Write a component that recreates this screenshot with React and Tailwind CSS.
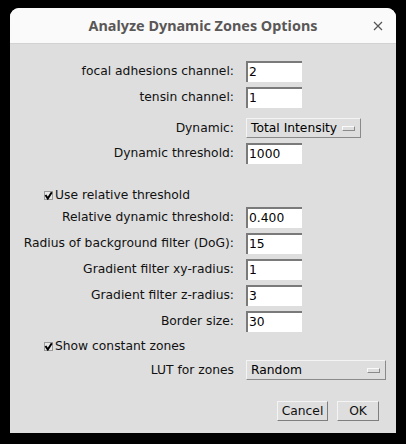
import React from 'react';

const font = { fontFamily: '"DejaVu Sans", sans-serif' };

function Field({ value }) {
  return (
    <div className="h-[21px] w-[56px] bg-white border-t-2 border-l-2 border-t-[#7a7a7a] border-l-[#7a7a7a] flex items-center pl-[1px] text-[12.3px] text-black leading-none">
      {value}
    </div>
  );
}

function Choice({ value, width }) {
  return (
    <div className={`h-[20px] ${width} bg-[#dedede] border border-t-[#f4f4f4] border-l-[#f4f4f4] border-r-[#8a8a8a] border-b-[#8a8a8a] flex items-center justify-between pl-[4px] pr-[5px] text-[12.3px] text-black leading-none`}>
      <span>{value}</span>
      <span className="w-[13px] h-[5px] border border-t-[#fafafa] border-l-[#fafafa] border-r-[#8a8a8a] border-b-[#8a8a8a] bg-[#dedede]" />
    </div>
  );
}

function Row({ label, children, className = '' }) {
  return (
    <div className={`grid grid-cols-[224px_auto] gap-x-[12px] items-center ${className}`}>
      <div className="text-right text-[12.3px] text-[#111] leading-none whitespace-nowrap">{label}</div>
      <div>{children}</div>
    </div>
  );
}

function Check({ label, className = '' }) {
  return (
    <div className={`flex items-center pl-[34px] h-[16px] text-[12.3px] text-[#111] leading-none ${className}`}>
      <svg width="9" height="9" viewBox="0 0 9 9" className="mr-[2px]">
        <rect x="0.5" y="0.5" width="8" height="8" fill="#e8e8e8" stroke="#9a9a9a" />
        <path d="M1.5 4 L3.8 7.5 L7.8 1.2" fill="none" stroke="#000" strokeWidth="2" />
      </svg>
      <span>{label}</span>
    </div>
  );
}

function Button({ label, width }) {
  return (
    <div className={`h-[20px] ${width} border border-t-[#f4f4f4] border-l-[#f4f4f4] border-r-[#7e7e7e] border-b-[#7e7e7e] flex items-center justify-center text-[12.3px] text-[#111] leading-none`}>
      {label}
    </div>
  );
}

export default function App() {
  return (
    <div className="w-[406px] h-[444px] bg-black pt-[8px] pl-[10px]" style={font}>
      <div className="w-[386px] h-[425px] rounded-t-[9px] overflow-hidden bg-[#dedede] flex flex-col">
        <div className="h-[36px] bg-[#fafafa] border-b border-[#d2d2d2] relative flex items-center justify-center">
          <span className="text-[14.4px] font-bold text-[#5a5757]" style={{ fontFamily: '"Noto Sans", sans-serif' }}>
            Analyze Dynamic Zones Options
          </span>
          <svg className="absolute right-[13px] top-[13px]" width="10" height="10" viewBox="0 0 10 10">
            <path d="M1 1 L9 9 M9 1 L1 9" stroke="#555" strokeWidth="1.2" />
          </svg>
        </div>

        <div className="flex flex-col">
          <Row label="focal adhesions channel:" className="mt-[17px]"><Field value="2" /></Row>
          <Row label="tensin channel:" className="mt-[5px]"><Field value="1" /></Row>
          <Row label="Dynamic:" className="mt-[10px]"><Choice value="Total Intensity" width="w-[115px]" /></Row>
          <Row label="Dynamic threshold:" className="mt-[5px]"><Field value="1000" /></Row>
          <Check label="Use relative threshold" className="mt-[23px]" />
          <Row label="Relative dynamic threshold:" className="mt-[4px]"><Field value="0.400" /></Row>
          <Row label="Radius of background filter (DoG):" className="mt-[5px]"><Field value="15" /></Row>
          <Row label="Gradient filter xy-radius:" className="mt-[5px]"><Field value="1" /></Row>
          <Row label="Gradient filter z-radius:" className="mt-[5px]"><Field value="3" /></Row>
          <Row label="Border size:" className="mt-[5px]"><Field value="30" /></Row>
          <Check label="Show constant zones" className="mt-[6px]" />
          <Row label="LUT for zones" className="mt-[6px]"><Choice value="Random" width="w-[140px]" /></Row>
          <div className="flex justify-end gap-[9px] pr-[17px] mt-[21px]">
            <Button label="Cancel" width="w-[51px]" />
            <Button label="OK" width="w-[42px]" />
          </div>
        </div>
      </div>
    </div>
  );
}
